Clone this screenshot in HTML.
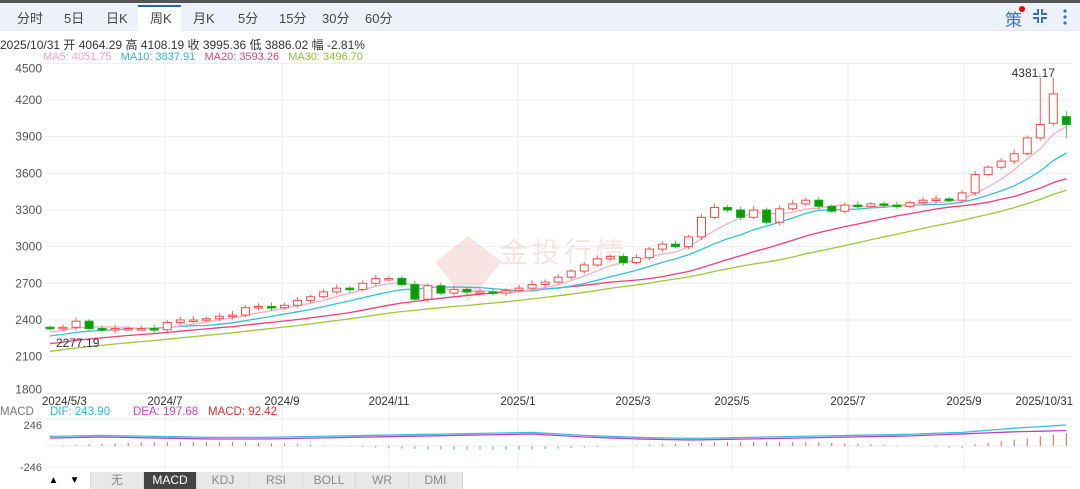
<!DOCTYPE html>
<html><head><meta charset="utf-8"><style>
*{margin:0;padding:0;box-sizing:border-box}
body{width:1080px;height:489px;overflow:hidden;background:#fff;font-family:"Liberation Sans","Noto Sans CJK SC",sans-serif;position:relative}
#top{position:absolute;left:0;top:0;width:1080px;height:3px;background:#555}
#tabs{position:absolute;left:0;top:3px;width:1080px;height:28px;background:#edf2fa;border-bottom:1px solid #e4e8ef}
.t{position:absolute;top:5px;font-size:13px;color:#444}
#act{position:absolute;left:138px;top:2px;width:43px;height:27px;background:#fff;border-top:2px solid #2a5fb8}
#info{position:absolute;left:0;top:36px;font-size:12px;color:#333;white-space:nowrap}
#ma{position:absolute;left:43px;top:51px;font-size:11px;white-space:nowrap}
#bot{position:absolute;left:0;top:472px;width:1080px;height:17px}
.b{position:absolute;top:0;height:17px;background:#e8e8e8;border-left:1px solid #d8d8d8;color:#888;font-size:12px;text-align:center;line-height:17px;width:53px}
</style></head><body>
<div id="top"></div>
<div id="tabs">
<div id="act"></div>
<span class="t" style="left:17px">分时</span><span class="t" style="left:64px">5日</span><span class="t" style="left:106px">日K</span><span class="t" style="left:150px">周K</span><span class="t" style="left:193px">月K</span><span class="t" style="left:238px">5分</span><span class="t" style="left:279px">15分</span><span class="t" style="left:322px">30分</span><span class="t" style="left:365px">60分</span>
<span style="position:absolute;left:1005px;top:3px;font-size:17px;color:#3a72c8">策</span>
<span style="position:absolute;left:1019px;top:3px;width:6px;height:6px;border-radius:3px;background:#e00"></span>
<svg style="position:absolute;left:1032px;top:5px" width="16" height="16" stroke="#3a72c8" stroke-width="2" fill="none"><path d="M6 1v5H1M10 1v5h5M6 15v-5H1M10 15v-5h5"/></svg>
<svg style="position:absolute;left:1062px;top:5px" width="6" height="18" fill="#3a72c8"><circle cx="3" cy="3" r="1.6"/><circle cx="3" cy="9" r="1.6"/><circle cx="3" cy="15" r="1.6"/></svg>
</div>
<div id="info">2025/10/31 开 4064.29 高 4108.19 收 3995.36 低 3886.02 幅 -2.81%</div>
<div id="ma"><span style="color:#f7a3bf">MA5: 4051.75</span>&nbsp;&nbsp;&nbsp;<span style="color:#2bb8dd">MA10: 3837.91</span>&nbsp;&nbsp;&nbsp;<span style="color:#ee3f77">MA20: 3593.26</span>&nbsp;&nbsp;&nbsp;<span style="color:#8cc43a">MA30: 3496.70</span></div>
<svg id="c" style="position:absolute;left:0;top:0" width="1080" height="472"></svg>
<div id="bot">
<div style="position:absolute;left:43px;top:0;width:44px;height:17px;background:#fff;font-size:10px;line-height:17px">&nbsp;&nbsp;▲&nbsp;&nbsp;&nbsp;&nbsp;▼</div>
<div class="b" style="left:90px">无</div>
<div class="b" style="left:143px;background:#444;color:#fff">MACD</div>
<div class="b" style="left:196px">KDJ</div>
<div class="b" style="left:249px">RSI</div>
<div class="b" style="left:302px">BOLL</div>
<div class="b" style="left:355px">WR</div>
<div class="b" style="left:408px;width:55px;border-right:1px solid #d8d8d8">DMI</div>
</div>
<script>
var C=[2330,2340,2390,2330,2320,2330,2330,2330,2320,2380,2400,2400,2410,2430,2440,2500,2510,2500,2520,2560,2590,2630,2660,2650,2700,2740,2740,2690,2570,2680,2620,2650,2630,2630,2620,2640,2660,2690,2710,2750,2800,2850,2900,2920,2870,2910,2980,3020,3000,3080,3240,3320,3300,3240,3300,3200,3310,3350,3380,3330,3290,3340,3330,3350,3340,3330,3360,3380,3390,3380,3440,3590,3650,3700,3760,3890,4000,4250,4000];
var pre=[];for(var i=0;i<30;i++)pre.push(1950+i*12.5);
var A=pre.concat(C);
function Y(p){return 100+(4200-p)*0.1222}
function X(i){return 50+i*13.03}
var s='';
[4500,4200,3900,3600,3300,3000,2700,2400,2100,1800].forEach(function(p){var y=Y(p);var ly=p==4500?y+9:(p==1800?y:y+4);s+='<line x1="45" x2="1072" y1="'+y+'" y2="'+y+'" stroke="#eee"/><text x="42" y="'+ly+'" font-size="12" fill="#555" text-anchor="end">'+p+'</text>';});
var xs=[[45,'2024/5/3'],[165,'2024/7'],[282,'2024/9'],[389,'2024/11'],[518,'2025/1'],[633,'2025/3'],[732,'2025/5'],[848,'2025/7'],[964,'2025/9']];
xs.forEach(function(a){if(a[0]>50)s+='<line x1="'+a[0]+'" x2="'+a[0]+'" y1="64" y2="472" stroke="#eee"/>';s+='<text x="'+(a[0]==45?42:a[0])+'" y="405" font-size="11.5" fill="#333" text-anchor="'+(a[0]==45?'start':'middle')+'">'+a[1]+'</text>';});
s+='<text x="1073" y="405" font-size="11.5" fill="#333" text-anchor="end">2025/10/31</text>';
s+='<line x1="45" x2="1072" y1="394" y2="394" stroke="#e8e8e8"/><line x1="45" x2="1072" y1="419" y2="419" stroke="#e8e8e8"/><line x1="45" x2="1072" y1="446" y2="446" stroke="#eee"/><line x1="45" x2="1072" y1="467" y2="467" stroke="#eee"/>';
s+='<text x="42" y="429" font-size="11" fill="#555" text-anchor="end">246</text><text x="42" y="471" font-size="11" fill="#555" text-anchor="end">-246</text>';
s+='<text x="0" y="415" font-size="11.5" fill="#777">MACD</text><text x="50" y="415" font-size="11.5" fill="#2bb8dd">DIF: 243.90</text><text x="133" y="415" font-size="11.5" fill="#d040c8">DEA: 197.68</text><text x="208" y="415" font-size="11.5" fill="#e03030">MACD: 92.42</text>';
s+='<g opacity="0.13"><path d="M435 262 L468 236 L502 262 L468 302Z" fill="#d04030"/><text x="500" y="262" font-size="28" fill="#d04030" letter-spacing="4">金投行情</text><text x="505" y="292" font-size="14" fill="#999">quote.cngold.org</text></g>';
function ma(n,col){var d='';for(var i=0;i<C.length;i++){var k=i+30,sum=0;for(var j=0;j<n;j++)sum+=A[k-j];d+=(i?'L':'M')+X(i).toFixed(1)+' '+Y(sum/n).toFixed(1);}s+='<path d="'+d+'" fill="none" stroke="'+col+'" stroke-width="1.3"/>';}
ma(30,'#9cc83a');ma(20,'#ee3f77');ma(10,'#36c0e0');ma(5,'#f7b0c8');
for(var i=0;i<C.length;i++){var o=i?A[i+29]:2340,c=C[i];if(i==77)o=4010;if(i==78)o=4064;
var hi=Math.max(o,c)+15+(i*7%20),lo=Math.min(o,c)-15-(i*5%15);if(i==77)hi=4381;if(i==76)hi=4381;if(i==78){hi=4108;lo=3886}
var x=X(i),up=c>=o,col=up?'#f0504a':'#18a818';var t=Y(Math.max(o,c)),b=Y(Math.min(o,c));if(b-t<1.5)b=t+1.5;
s+='<line x1="'+x+'" x2="'+x+'" y1="'+Y(hi)+'" y2="'+Y(lo)+'" stroke="'+(up?'#f06060':'#4cc04c')+'"/>';
s+='<rect x="'+(x-4)+'" y="'+t+'" width="8" height="'+(b-t)+'" fill="'+(up?'#fff':'#0a9a0a')+'" stroke="'+col+'"/>';}
s+='<text x="1055" y="77" font-size="12" fill="#333" text-anchor="end">4381.17</text><text x="56" y="347" font-size="12" fill="#333">2277.19</text>';
var dif='',dea='',d1=[437,436,437,438,438,437,436,435,434,433,436,438,439,438,437,436,435,433,432,432];
for(var i=0;i<C.length;i++){var p=i/(C.length-1)*(d1.length-1),k=Math.floor(p),f=p-k,v=d1[k]+(d1[Math.min(k+1,d1.length-1)]-d1[k])*f;if(i>70)v-=(i-70)*0.8;dif+=(i?'L':'M')+X(i)+' '+(v-0.6);dea+=(i?'L':'M')+X(i)+' '+(v+1+(i>70?(i-70)*0.5:0));}
s+='<path d="'+dif+'" fill="none" stroke="#36c0e0" stroke-width="1.3"/><path d="'+dea+'" fill="none" stroke="#c040c0" stroke-width="1.3"/>';
for(var i=0;i<C.length;i++){var h=Math.sin(i/7)*4;if(i>70)h=(i-70)*1.6;var x=X(i);if(h>0)s+='<line x1="'+x+'" x2="'+x+'" y1="'+(446-h)+'" y2="446" stroke="#e06050"/>';else s+='<line x1="'+x+'" x2="'+x+'" y1="446" y2="'+(446-h)+'" stroke="#50c090"/>';}
document.getElementById('c').innerHTML=s;
</script>
</body></html>
